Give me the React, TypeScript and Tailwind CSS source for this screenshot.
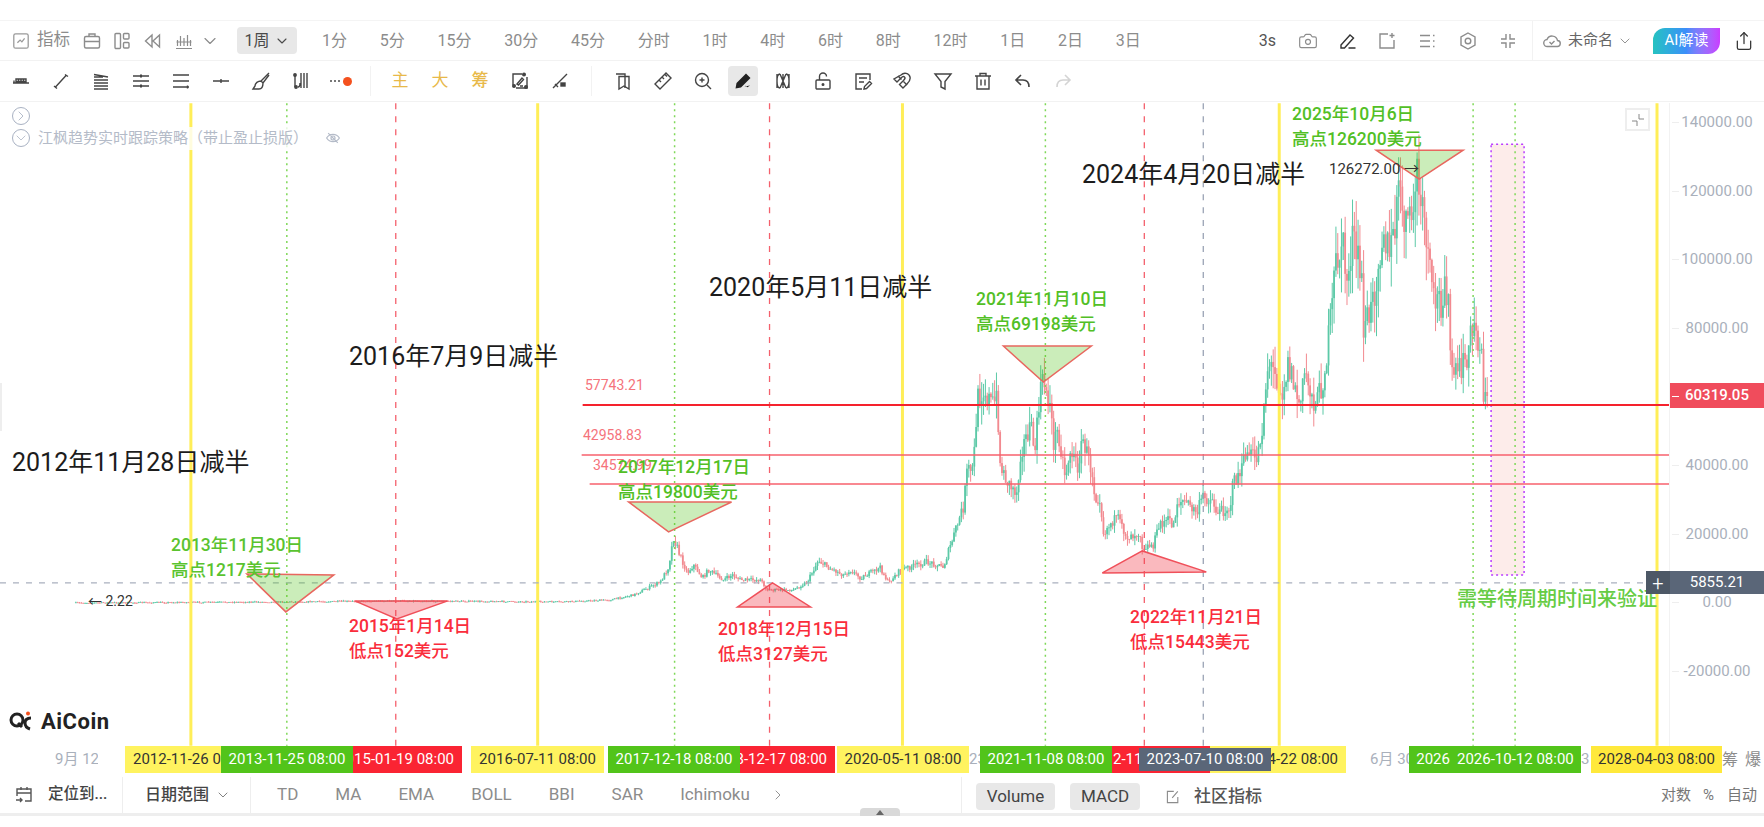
import React from "react";
import { ChevronDown, ChevronRight, Camera, Share } from "lucide-react";

const FONT = "font-['Roboto','Noto_Sans_CJK_SC',sans-serif]";

// [x, y] in page pixels, traced from the weekly close
const PATH: [number, number][] = [
	[75, 603], [286, 602], [400, 601], [560, 602], [610, 600], [633, 595], [660, 582], [668, 567], [673, 537], [680, 557], [687, 573], [693, 565], [702, 578], [708, 570], [723, 580], [732, 575], [740, 580], [760, 580], [767, 590], [793, 590], [807, 582], [818, 560], [827, 567], [843, 575], [850, 570], [860, 578], [880, 568], [888, 583], [900, 570], [927, 562], [943, 567], [953, 537], [963, 507], [967, 470], [973, 470], [977, 400], [983, 388], [992, 405], [997, 398], [1000, 467], [1008, 483], [1017, 493], [1020, 453], [1030, 427], [1035, 450], [1040, 387], [1045, 383], [1050, 407], [1053, 443], [1058, 430], [1065, 477], [1070, 450], [1077, 467], [1083, 440], [1092, 473], [1095, 497], [1100, 497], [1103, 533], [1113, 520], [1118, 520], [1127, 537], [1140, 532], [1142, 547], [1153, 545], [1160, 523], [1170, 520], [1173, 527], [1177, 503], [1183, 500], [1197, 513], [1202, 497], [1212, 500], [1217, 513], [1230, 507], [1233, 483], [1243, 467], [1245, 453], [1257, 458], [1262, 427], [1265, 390], [1268, 363], [1277, 377], [1282, 393], [1288, 363], [1300, 407], [1305, 370], [1312, 397], [1317, 403], [1325, 370], [1332, 307], [1335, 267], [1342, 240], [1347, 283], [1352, 237], [1362, 283], [1362, 330], [1372, 310], [1377, 267], [1383, 227], [1390, 257], [1395, 227], [1397, 193], [1405, 217], [1410, 230], [1413, 207], [1417, 173], [1422, 217], [1427, 240], [1432, 300], [1442, 300], [1445, 273], [1448, 297], [1450, 357], [1455, 377], [1463, 367], [1472, 333], [1476, 327], [1482, 357], [1483, 393], [1487, 383], [1487, 403],
];

function buildCandles() {
	let seed = 7;
	const rnd = () => {
		seed = (seed * 16807) % 2147483647;
		return seed / 2147483647;
	};
	const out: { x: number; top: number; h: number; wt: number; wh: number; up: boolean }[] = [];
	let i = 0;
	let prev = 603;
	for (let x = 75; x < 1488; x += 1.846) {
		while (i < PATH.length - 2 && PATH[i + 1][0] < x) i++;
		const [x0, y0] = PATH[i];
		const [x1, y1] = PATH[i + 1];
		const t = x1 === x0 ? 1 : Math.min(1, (x - x0) / (x1 - x0));
		const amp = 0.6 + (602 - (y0 + (y1 - y0) * t)) * 0.06;
		const close = y0 + (y1 - y0) * t + (rnd() - 0.5) * amp * 2;
		const top = Math.min(prev, close);
		const bottom = Math.max(prev, close);
		const wt = top - rnd() * amp * 1.5;
		const wb = bottom + rnd() * amp * 1.5;
		out.push({ x, top, h: Math.max(bottom - top, 0.8), wt, wh: wb - wt, up: close <= prev });
		prev = close;
	}
	return out;
}

const candles = buildCandles();

const Ico = ({ children, className = "" }: { children: React.ReactNode; className?: string }) => (
	<svg viewBox="0 0 20 20" fill="none" stroke="currentColor" strokeWidth={1.4} className={`h-5 w-5 ${className}`}>
		{children}
	</svg>
);

const drawTools: React.ReactNode[] = [
	<Ico key="a"><path d="M2 12h16M3 12V9.500M5 8h10v2.500H5zM7.500 8v2.500M10 8v2.500M12.500 8v2.500" /></Ico>,
	<Ico key="b"><path d="M4.500 16 15.500 4M3 15l3 2.500M14 3.500l3 2" /></Ico>,
	<Ico key="c"><path d="M3 3.500 17 6M3 6h9M3 9h14M3 12h14M3 15h14M3 18h14" /></Ico>,
	<Ico key="d"><path d="M2 5h16M2 10h16M2 15h16" /><path d="M10 3.500v3M10 13.500v3" strokeWidth={2} /></Ico>,
	<Ico key="e"><path d="M2 4h16M2 10h16M2 16h16" /><path d="M16.500 14.500v3" /></Ico>,
	<Ico key="f"><path d="M2 10h16M10 8v4" /></Ico>,
	<Ico key="g"><path d="M18 2 10 10l2 2 6-8M10 10c-3 0-6 2-6 5l-2 3h6c3 0 4-3 4-6" /></Ico>,
	<Ico key="h"><path d="M4 4v12M7 16c2 0 2-2 2-4M10 2v15M13 2v15M16 2v15" /><circle cx="4" cy="4" r="1.200" fill="currentColor" /><circle cx="5" cy="16" r="1.200" fill="currentColor" /></Ico>,
];

const editTools: React.ReactNode[] = [
	<Ico key="a"><path d="M3 3h9v14" /><path d="M6 5.500h10V18l-5-3-5 3z" /></Ico>,
	<Ico key="b"><path d="m2 13 11-11 5 5L7 18zM6 9l2 2M9 6l2 2M12 3.500l2 2" /></Ico>,
	<Ico key="c"><circle cx="9" cy="9" r="6.500" /><path d="m14 14 4 4M6.500 9h5M9 6.500v5" /></Ico>,
];

const sideTools: React.ReactNode[] = [
	<Ico key="a"><path d="M4 3v14M16 3v14M7 3c-2 0-3 2-3 7s1 7 3 7M13 3c2 0 3 2 3 7s-1 7-3 7M7 3l6 14M13 3 7 17M10 3v14" /></Ico>,
	<Ico key="b"><rect x="3" y="9" width="14" height="9" rx="1" /><path d="M6.500 9V5.500a3.500 3.500 0 0 1 7 0" /><circle cx="10" cy="13.500" r=".8" fill="currentColor" /></Ico>,
	<Ico key="c"><path d="M17 9V3H3v15h6M6 7h8M6 11h5" /><path d="m11 18 .5-2.500 5-5 2 2-5 5z" /></Ico>,
	<Ico key="d"><path d="M8 4c3-3 8-2 9 2 .8 3-1 5-3 7l-4 4-3.500-3.500 4-4c1.500-1.500 2-2.500 1-3.500s-2-.5-3.500 1l-4 4L1 8z" /><path d="m5 5 3.500 3.500M10.500 10.500 14 14" /></Ico>,
	<Ico key="e"><path d="M2 3h16l-6 7.500V18l-4-2v-5.500z" /></Ico>,
	<Ico key="f"><path d="M2 5h16M7 5V2.500h6V5M4 5v13h12V5M8 8.500v6M12 8.500v6" /></Ico>,
];

const periods = ["1分", "5分", "15分", "30分", "45分", "分时", "1时", "4时", "6时", "8时", "12时", "1日", "2日", "3日"];
const indicators = ["TD", "MA", "EMA", "BOLL", "BBI", "SAR", "Ichimoku"];
const prices = ["140000.00", "120000.00", "100000.00", "80000.00", "60000.00", "40000.00", "20000.00", "0.00", "-20000.00"];

const Tool = ({ children, className = "" }: { children: React.ReactNode; className?: string }) => (
	<div className={`flex h-[30px] w-10 shrink-0 items-center justify-center ${className}`}>{children}</div>
);

const Note = ({ lines, className }: { lines: string[]; className: string }) => (
	<div className={`absolute whitespace-nowrap text-[17.5px] font-medium leading-[25px] ${className}`}>
		{lines.map((l) => (
			<div key={l}>{l}</div>
		))}
	</div>
);

const Halving = ({ children, className }: { children: string; className: string }) => (
	<div className={`absolute whitespace-nowrap text-[25px] leading-[34px] text-[#1c1c1c] ${className}`}>{children}</div>
);

const Stamp = ({ children, className }: { children: React.ReactNode; className: string }) => (
	<div className={`flex h-full shrink-0 items-center overflow-hidden whitespace-nowrap text-[15px] ${className}`}>{children}</div>
);

const Chart = () => (
	<svg viewBox="0 103 1670 643" className="absolute inset-0 h-full w-full">
		{candles.map((c) => (
			<g key={c.x} fill={c.up ? "#5cc9a7" : "#f28a90"}>
				<rect x={c.x + 0.4} y={c.wt} width={1} height={c.wh} />
				<rect x={c.x} y={c.top} width={1.8} height={c.h} />
			</g>
		))}
		<rect x="1492" y="144" width="33" height="431" fill="#fdecea" stroke="#b93cff" strokeWidth="1.5" strokeDasharray="2 3" />
		{[191, 538, 903, 1280, 1658].map((x) => (
			<line key={x} x1={x} x2={x} y1="103" y2="746" stroke="#ffee58" strokeWidth="3" />
		))}
		{[287, 675, 1046, 1474, 1516].map((x) => (
			<line key={x} x1={x} x2={x} y1="103" y2="746" stroke="#7fd858" strokeWidth="1.5" strokeDasharray="2 4" />
		))}
		{[396, 770, 1145].map((x) => (
			<line key={x} x1={x} x2={x} y1="103" y2="746" stroke="#f4606c" strokeWidth="1.3" strokeDasharray="6 7" />
		))}
		<line x1="1204" x2="1204" y1="103" y2="746" stroke="#9aa3b5" strokeWidth="1.3" strokeDasharray="6 7" />
		<line x1="0" x2="1646" y1="583" y2="583" stroke="#a9b0be" strokeWidth="1.3" strokeDasharray="6 7" />
		<line x1="583" x2="1670" y1="405" y2="405" stroke="#f5222d" strokeWidth="2" />
		<line x1="582" x2="1670" y1="455" y2="455" stroke="#f7616c" strokeWidth="1.4" />
		<line x1="590" x2="1670" y1="484" y2="484" stroke="#f7616c" strokeWidth="1.4" />
		{["247,574 334,575 286,612", "629,502 732,502 669,532", "1004,346 1092,346 1044,382", "1377,150 1464,150 1420,179"].map((p) => (
			<polygon key={p} points={p} fill="#52c41a" fillOpacity=".3" stroke="#e8675f" strokeWidth="1.5" />
		))}
		{["355,601 448,601 397,619", "738,607 811,607 773,583", "1103,573 1207,572 1143,551"].map((p) => (
			<polygon key={p} points={p} fill="#f23645" fillOpacity=".35" stroke="#f0505a" strokeWidth="1.5" />
		))}
	</svg>
);

export default function App() {
	return (
		<div className={`flex h-screen w-full flex-col overflow-hidden bg-white ${FONT}`}>
			<div className="h-[21px] shrink-0 border-b border-[#f4f4f4]" />

			{/* period bar */}
			<div className="flex h-10 shrink-0 items-center border-b border-[#f2f2f2] pl-3 text-[16px] text-[#8c8c8c]">
				<Ico className="mr-[7px] h-[18px] w-[18px] text-[#999]"><rect x="2" y="2" width="16" height="16" rx="2" /><path d="m6 12 3-3 2 2 3-4" /></Ico>
				<span className="text-[16.5px]">指标</span>
				<Ico className="ml-[12px] text-[#8c8c8c]"><rect x="2.500" y="5.500" width="15" height="11.500" rx="1.500" /><path d="M7 5.500V3h6v2.500M2.500 10.500h15" /></Ico>
				<Ico className="ml-[10px] text-[#8c8c8c]"><rect x="3" y="2.500" width="5.500" height="15" rx="1" /><rect x="11.500" y="2.500" width="5.500" height="5.500" rx="1" /><rect x="11.500" y="11.500" width="5.500" height="5.500" rx="1" /></Ico>
				<Ico className="ml-[11px] text-[#8c8c8c]"><path d="M9 4 2.500 10 9 16zM16.500 4 10 10l6.500 6z" /></Ico>
				<Ico className="ml-[11px] text-[#8c8c8c]"><path d="M2 17.500h16M3.500 15V9M6.500 15V5M10 15V7M13.500 15V4M16.500 15V9M2.500 11h15" strokeWidth={1.2} /></Ico>
				<ChevronDown className="ml-[6px] h-5 w-5 text-[#8c8c8c]" strokeWidth={1.4} />
				<div className="ml-[17px] mr-[25px] flex h-[27px] w-[60px] items-center justify-center gap-1 rounded bg-[#e8e8e8] text-[#4a4a4a]">
					1周<ChevronDown className="h-4 w-4" strokeWidth={1.6} />
				</div>
				<div className="flex items-center gap-[32.75px]">
					{periods.map((p) => (
						<span key={p}>{p}</span>
					))}
				</div>
				<div className="ml-auto flex items-center text-[#555]">
					<span className="mr-[22px]">3s</span>
					<Camera className="mr-[20px] h-5 w-5 text-[#8c8c8c]" strokeWidth={1.4} />
					<Ico className="mr-[19px] text-[#333]"><path d="m3 14 9-10 3.500 3-9 10H3zM10.500 17h7" /></Ico>
					<Ico className="mr-[20px] text-[#8c8c8c]"><path d="M11 3H3v14h14V9M15 2v5M12.500 4.500h5" /></Ico>
					<Ico className="mr-[21px] text-[#8c8c8c]"><path d="M3 4.500h10M3 10h10M3 15.500h10M16 4.500h1.500M16 10h1.500M16 15.500h1.500" /></Ico>
					<Ico className="mr-[20px] text-[#8c8c8c]"><path d="m10 2 7 4v8l-7 4-7-4V6z" /><circle cx="10" cy="10" r="2.800" /></Ico>
					<Ico className="mr-[14px] text-[#8c8c8c]"><path d="M8 3v5H3M12 3v5h5M8 17v-5H3M12 17v-5h5" /></Ico>
					<div className="mr-[9px] h-10 w-px bg-[#f2f2f2]" />
					<Ico className="mr-[6px] text-[#8c8c8c]"><path d="M5.500 15.500a3.500 3.500 0 0 1-.5-7 5.500 5.500 0 0 1 10.500 1 3 3 0 0 1-.5 6z" /><path d="m7.500 11 2 2 3-3" /></Ico>
					<span className="text-[15px] text-[#666]">未命名</span>
					<ChevronDown className="ml-[4px] mr-[20px] h-4 w-4 text-[#8c8c8c]" strokeWidth={1.4} />
					<div className="flex h-[26px] w-[67px] items-center justify-center rounded-tl-xl rounded-br-xl bg-gradient-to-r from-[#26c2c0] via-[#3d8dfa] to-[#c93cff] text-[15px] text-white">
						AI解读
					</div>
					<Share className="ml-[14px] mr-[10px] h-5 w-5 text-[#333]" strokeWidth={1.5} />
				</div>
			</div>

			{/* drawing bar */}
			<div className="flex h-[41px] shrink-0 items-center border-b border-[#f2f2f2] pl-px text-[#444]">
				{drawTools.map((t, i) => (
					<Tool key={i}>{t}</Tool>
				))}
				<Tool>
					<span className="flex items-center gap-[2px]">
						<span className="h-[2px] w-[2px] bg-[#777]" />
						<span className="h-[2px] w-[2px] bg-[#777]" />
						<span className="h-[2px] w-[2px] bg-[#777]" />
						<span className="ml-px h-[9px] w-[9px] rounded-full bg-[#f4511e]" />
					</span>
				</Tool>
				<div className="mx-[9px] h-[30px] w-px shrink-0 bg-[#f2f2f2]" />
				<Tool className="text-[17px] text-[#e8b94a]">主</Tool>
				<Tool className="text-[17px] text-[#e8b94a]">大</Tool>
				<Tool className="text-[17px] font-medium text-[#e8b94a]">筹</Tool>
				<Tool><Ico><path d="M12 3H3v11M17 6v11H6" /><circle cx="4" cy="15" r="1.300" fill="currentColor" /><circle cx="14" cy="3.500" r="1.300" fill="currentColor" /><circle cx="16" cy="16" r="1.300" fill="currentColor" /><path d="m7 13 5-6 1.500 1.500-5 5.500zM10 15h3" /></Ico></Tool>
				<Tool><Ico><path d="M3 17 17 3M5 13l3 3" /><rect x="11" y="12" width="4" height="3" fill="currentColor" /></Ico></Tool>
				<div className="mx-[11px] h-[30px] w-px shrink-0 bg-[#f2f2f2]" />
				{editTools.map((t, i) => (
					<Tool key={i}>{t}</Tool>
				))}
				<Tool>
					<div className="flex h-[30px] w-[30px] items-center justify-center rounded bg-[#e8e8e8] text-[#222]">
						<svg viewBox="0 0 20 20" className="h-5 w-5" fill="currentColor">
							<path d="M13 2.500 17.500 7 8 16.500l-5.500 1 1-5.500zM11.500 15.500c1-1 1.500-1 2 0s1 1 2 0l1.500-1" />
						</svg>
					</div>
				</Tool>
				{sideTools.map((t, i) => (
					<Tool key={i}>{t}</Tool>
				))}
				<Tool><Ico><path d="M8 4 3 9l5 5M3 9h7c4 0 6 3 6 7" strokeWidth={1.6} /></Ico></Tool>
				<Tool><Ico className="text-[#d4d4d4]"><path d="m12 4 5 5-5 5M17 9h-7c-4 0-6 3-6 7" strokeWidth={1.6} /></Ico></Tool>
			</div>

			{/* chart + price axis */}
			<div className="mt-px flex h-[643px] shrink-0">
				<div className="relative w-[1670px] shrink-0 border-r border-[#f2f2f2]">
					<Chart />

					<div className="absolute left-3 top-[4px] h-[18px] w-[18px] rounded-full border border-[#a9b2c3] text-[#a9b2c3]">
						<ChevronRight className="h-4 w-4" strokeWidth={1.3} />
					</div>
					<div className="absolute left-3 top-[24px] flex items-center bg-white/80 text-[15px] text-[#b4bbc8]">
						<div className="mr-2 h-[18px] w-[18px] rounded-full border border-[#a9b2c3]">
							<ChevronDown className="h-4 w-4" strokeWidth={1.3} />
						</div>
						<span>江枫趋势实时跟踪策略（带止盈止损版）</span>
						<svg viewBox="0 0 20 20" fill="none" stroke="currentColor" strokeWidth={1.5} className="ml-[17px] h-4 w-4">
							<path d="M2 10c4-6 12-6 16 0-4 6-12 6-16 0zM4 4l12 12" />
							<circle cx="10" cy="10" r="2.500" />
						</svg>
					</div>

					<div className="absolute left-[1625px] top-[5px] flex h-[23px] w-[25px] items-center justify-center border-2 border-[#eeeeee] text-[#888]">
						<svg viewBox="0 0 16 16" fill="none" stroke="currentColor" className="h-4 w-4"><path d="M9 2v5h5M2 9h5v5" /></svg>
					</div>

					<Halving className="left-[12px] top-[343px]">2012年11月28日减半</Halving>
					<Halving className="left-[349px] top-[237px]">2016年7月9日减半</Halving>
					<Halving className="left-[709px] top-[168px]">2020年5月11日减半</Halving>
					<Halving className="left-[1082px] top-[55px]">2024年4月20日减半</Halving>

					<div className="absolute left-[585px] top-[272px] text-[14px] text-[#f5737b]">57743.21</div>
					<div className="absolute left-[583px] top-[322px] text-[14px] text-[#f5737b]">42958.83</div>
					<div className="absolute left-[593px] top-[352px] text-[14px] text-[#f5737b]">34574.99</div>

					<Note lines={["2013年11月30日", "高点1217美元"]} className="left-[171px] top-[430px] text-[#5ac32f]" />
					<Note lines={["2015年1月14日", "低点152美元"]} className="left-[349px] top-[511px] text-[#fa2d3c]" />
					<Note lines={["2017年12月17日", "高点19800美元"]} className="left-[618px] top-[352px] text-[#52bf26]" />
					<Note lines={["2018年12月15日", "低点3127美元"]} className="left-[718px] top-[514px] text-[#fa2d3c]" />
					<Note lines={["2021年11月10日", "高点69198美元"]} className="left-[976px] top-[184px] text-[#52bf26]" />
					<Note lines={["2022年11月21日", "低点15443美元"]} className="left-[1130px] top-[502px] text-[#fa2d3c]" />
					<Note lines={["2025年10月6日", "高点126200美元"]} className="left-[1292px] top-[-1px] text-[#52bf26]" />
					<div className="absolute left-[1457px] top-[482px] whitespace-nowrap text-[20px] font-medium leading-7 text-[#66cc44]">需等待周期时间来验证</div>

					<div className="absolute left-[1329px] top-[55px] whitespace-nowrap text-[15px] text-[#333]">126272.00 →</div>
					<div className="absolute left-[88px] top-[488px] whitespace-nowrap text-[14px] text-[#333]">← 2.22</div>

					{/* AiCoin mark */}
					<div className="absolute left-[9px] top-[602px] flex items-center text-[#222]">
						<svg viewBox="0 0 24 22" className="h-[22px] w-6" fill="none" stroke="currentColor" strokeWidth={3}>
							<circle cx="8" cy="9" r="6" />
							<path d="m9 12 4 4" />
							<path d="M22 7c-4 0-6 2-6 5s2 5 5 6" />
							<circle cx="19" cy="2.500" r="2" fill="#f4511e" stroke="none" />
						</svg>
						<span className="ml-2 text-[22px] font-bold tracking-[0.5px]">AiCoin</span>
					</div>

					<div className="absolute left-[1646px] top-[468px] flex h-[23px] w-6 items-center justify-center bg-[#4d5866] text-[20px] font-light leading-none text-white">+</div>
					<div className="absolute left-0 top-[280px] h-[48px] w-[2px] bg-[#eeeeee]" />
				</div>

				<div className="relative w-[94px] shrink-0">
					<div className="-mt-[15px] flex flex-col">
						{prices.map((p) => (
							<div key={p} className="relative flex h-[68.6px] items-center justify-center text-[15px] text-[#a9b0bb]">
								<span className="absolute left-[2px] top-1/2 h-px w-[7px] bg-[#eeeeee]" />
								<span>{p}</span>
							</div>
						))}
					</div>
					<div className="absolute left-0 top-[280px] flex h-[25px] w-full items-center justify-center bg-[#f04c5c] text-[15px] font-medium text-white">
						<span className="absolute left-[2px] top-1/2 h-px w-[7px] bg-white" />
						60319.05
					</div>
					<div className="absolute left-0 top-[468px] flex h-[23px] w-full items-center justify-center bg-[#5a6678] text-[15px] text-white">5855.21</div>
				</div>
			</div>

			{/* time axis */}
			<div className="relative flex h-[27px] shrink-0 items-center text-[#a9b0bb]">
				<Stamp className="ml-[55px] mr-[27px] w-[43px] text-[14px]">9月 12</Stamp>
				<Stamp className="w-[96px] bg-[#fff35f] pl-2 text-[#333]">2012-11-26 08:00</Stamp>
				<Stamp className="w-[132px] justify-center bg-[#52c41a] text-white">2013-11-25 08:00</Stamp>
				<Stamp className="w-[109px] justify-end bg-[#fa2433] pr-2 text-white">2015-01-19 08:00</Stamp>
				<Stamp className="ml-[9px] w-[133px] justify-center bg-[#fff35f] text-[#333]">2016-07-11 08:00</Stamp>
				<Stamp className="ml-[4px] w-[132px] justify-center bg-[#52c41a] text-white">2017-12-18 08:00</Stamp>
				<Stamp className="w-[95px] justify-end bg-[#fa2433] pr-2 text-white">2018-12-17 08:00</Stamp>
				<Stamp className="ml-[2px] w-[132px] justify-center bg-[#fff35f] text-[#333]">2020-05-11 08:00</Stamp>
				<Stamp className="w-[11px] text-[14px]">23</Stamp>
				<Stamp className="w-[132px] justify-center bg-[#52c41a] text-white">2021-11-08 08:00</Stamp>
				<Stamp className="w-[98px] bg-[#fa2433] pl-px text-white">2-11-21 08:00</Stamp>
				<Stamp className="w-[136px] justify-end bg-[#fff35f] pr-2 text-[#333]">2024-04-22 08:00</Stamp>
				<Stamp className="ml-[24px] w-[39px] text-[14px]">6月 30</Stamp>
				<Stamp className="w-[172px] justify-center gap-[7px] bg-[#52c41a] text-white">
					<span>2026</span>
					<span>2026-10-12 08:00</span>
				</Stamp>
				<Stamp className="w-[10px] text-[14px]">3</Stamp>
				<Stamp className="w-[131px] justify-center bg-[#ffe93b] text-[#333]">2028-04-03 08:00</Stamp>
				<span className="text-[16px] text-[#8c8c8c]">筹</span>
				<span className="ml-[7px] text-[16px] text-[#8c8c8c]">爆</span>
				<div className="absolute left-[1139px] top-[2px] flex h-[23px] w-[132px] items-center justify-center bg-[#5a6678] text-[15px] text-white">2023-07-10 08:00</div>
			</div>

			{/* bottom bar */}
			<div className="relative mt-1 flex h-9 shrink-0 items-center text-[#8c8c8c]">
				<div className="flex h-full w-[123px] items-center border-r border-[#eeeeee] pl-[14px] text-[15.5px] font-medium text-[#444]">
					<Ico className="mr-[14px] text-[#555]"><path d="M3 11V4h14v12h-6M3 8h14M7 2v3M13 2v3M2 15h6M6 13l2 2-2 2" /></Ico>
					定位到...
				</div>
				<div className="flex h-full w-[128px] items-center border-r border-[#eeeeee] pl-[22px] text-[16px] font-medium text-[#444]">
					日期范围
					<ChevronDown className="ml-[6px] h-4 w-4 text-[#777]" strokeWidth={1.4} />
				</div>
				<div className="ml-[26px] flex items-center gap-[37px] text-[17px]">
					{indicators.map((t) => (
						<span key={t}>{t}</span>
					))}
				</div>
				<ChevronRight className="ml-[20px] h-4 w-4 text-[#8c8c8c]" strokeWidth={1.4} />
				<div className="absolute left-[961px] top-0 h-full w-px bg-[#eeeeee]" />
				<div className="absolute left-[976px] top-[6px] flex h-[27px] items-center gap-[15px] text-[17px] text-[#444]">
					<span className="flex h-full w-[79px] items-center justify-center rounded bg-[#e8e8e8]">Volume</span>
					<span className="flex h-full w-[70px] items-center justify-center rounded bg-[#e8e8e8]">MACD</span>
					<svg viewBox="0 0 20 20" fill="none" stroke="#8c8c8c" strokeWidth={1.4} className="ml-[10px] h-4 w-4"><path d="M11 3H3v14h13v-7M9 11 16 3" /></svg>
					<span className="-ml-[2px] font-medium text-[#555]">社区指标</span>
				</div>
				<div className="absolute left-[1661px] top-0 flex h-full items-center text-[15px] text-[#777]">
					<span>对数</span>
					<span className="ml-[12px]">%</span>
					<span className="ml-[13px]">自动</span>
				</div>
				<div className="absolute left-[860px] top-[31px] flex h-2 w-10 items-center justify-center rounded-t bg-[#d9d9d9]">
					<div className="h-0 w-0 border-x-[4px] border-b-[5px] border-x-transparent border-b-[#666]" />
				</div>
			</div>
			<div className="h-[3px] shrink-0 bg-[#eeeeee]" />
		</div>
	);
}
